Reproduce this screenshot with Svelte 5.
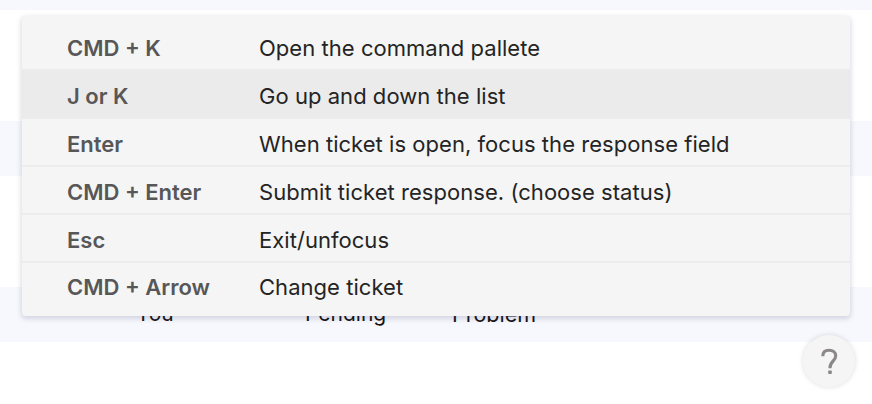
<script>
  const shortcuts = [
    { keys: 'CMD + K', action: 'Open the command pallete' },
    { keys: 'J or K', action: 'Go up and down the list', active: true },
    { keys: 'Enter', action: 'When ticket is open, focus the response field' },
    { keys: 'CMD + Enter', action: 'Submit ticket response. (choose status)' },
    { keys: 'Esc', action: 'Exit/unfocus' },
    { keys: 'CMD + Arrow', action: 'Change ticket' }
  ];
</script>

<div class="page">
  <div class="stripe first"></div>
  <div class="stripe"></div>
  <div class="stripe cells">
    <span class="you">You</span>
    <span class="pending">Pending</span>
    <span class="problem">Problem</span>
  </div>

  <div class="panel" role="dialog" aria-label="Keyboard shortcuts">
    {#each shortcuts as s}
      <div class="row" class:active={s.active}>
        <span class="keys">{s.keys}</span>
        <span class="action">{s.action}</span>
      </div>
    {/each}
  </div>

  <button class="help" aria-label="Help">
    <svg width="52" height="52" viewBox="0 0 52 52" fill="none">
      <path
        d="M19.8 21.2C19.8 17.2 22.3 15.3 26 15.3C30 15.3 32.7 17.4 32.7 20.9C32.7 25.7 26.9 26.4 26.9 33.2"
        stroke="#8c888a"
        stroke-width="3.1"
      />
      <rect x="25.2" y="35.6" width="3.6" height="3.4" rx="0.7" fill="#8c888a" />
    </svg>
  </button>
</div>

<style>
  .page {
    position: relative;
    width: 872px;
    height: 404px;
    overflow: hidden;
    background: #fff;
    font-family: Inter, "Liberation Sans", sans-serif;
    font-size: 22px;
  }
  .stripe {
    height: 55px;
    margin-bottom: 111px;
    background: #f7f8fd;
  }
  .stripe.first {
    height: 10px;
  }
  .cells {
    display: flex;
    font-size: 21px;
    line-height: 54px;
    color: #111;
  }
  .you {
    width: 169px;
    margin-left: 136px;
  }
  .pending {
    width: 147px;
  }
  .problem {
    font-size: 21.5px;
  }
  .panel {
    position: absolute;
    left: 22px;
    top: 16px;
    box-sizing: border-box;
    width: 828px;
    height: 300px;
    padding-top: 7px;
    border-radius: 4px;
    background: #f5f5f5;
    box-shadow: 0 2px 5px 1px rgba(75, 70, 120, 0.2);
  }
  .row {
    display: flex;
    align-items: center;
    box-sizing: border-box;
    height: 48px;
    padding: 4px 0 0 45px;
    border-bottom: 2px solid #ececec;
    white-space: nowrap;
  }
  .row.active {
    background: #ebebeb;
  }
  .row:last-child {
    border-bottom: 0;
    padding-top: 0;
  }
  .keys {
    width: 192px;
    font-weight: 600;
    color: #575757;
  }
  .action {
    letter-spacing: 0.04px;
    color: #242424;
  }
  .help {
    position: absolute;
    left: 803px;
    top: 335px;
    width: 52px;
    height: 52px;
    padding: 0;
    border: 0;
    border-radius: 50%;
    background: #f5f5f5;
    box-shadow: 0 0 4px 1px rgba(0, 0, 0, 0.1);
  }
  .help svg {
    display: block;
  }
</style>
